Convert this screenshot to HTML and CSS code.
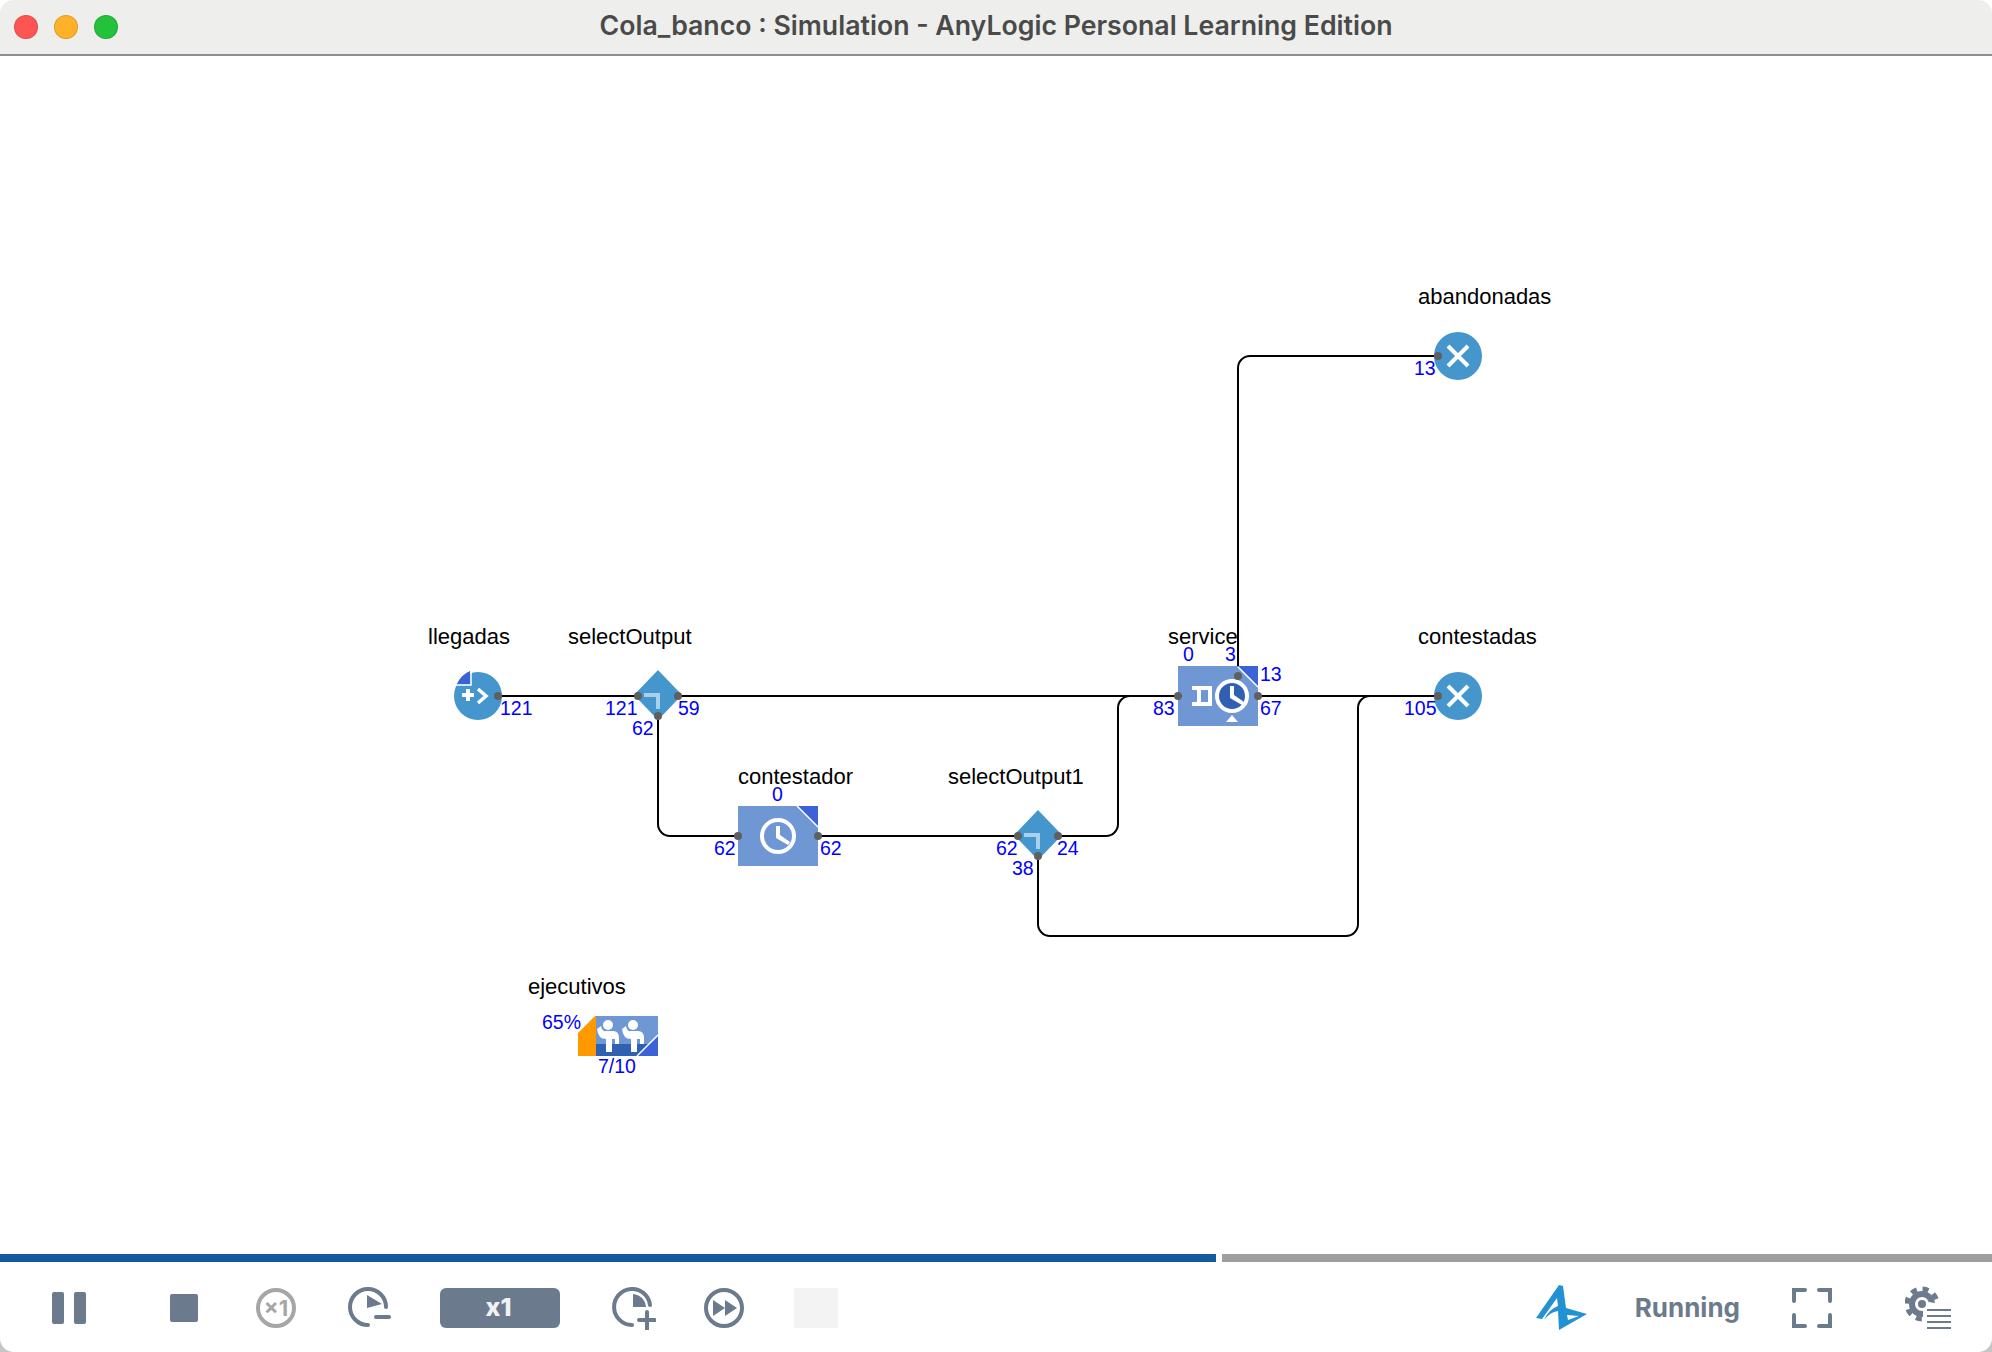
FILE: index.html
```html
<!DOCTYPE html>
<html lang="es">
<head>
    <meta charset="UTF-8">
    <title>Cola_banco : Simulation - AnyLogic Personal Learning Edition</title>
    <link rel="stylesheet" href="styles.css">
</head>
<body>
    <div class="window">
        <header class="titlebar">
            <div class="lights">
                <span class="light light-red"></span>
                <span class="light light-yellow"></span>
                <span class="light light-green"></span>
            </div>
            <div class="title">Cola_banco : Simulation - AnyLogic Personal Learning Edition</div>
        </header>

        <main class="canvas">
            <svg class="diagram" width="1992" height="1198" viewBox="0 56 1992 1198">
                <defs>
                    <g id="sink">
                        <circle class="block" r="24"/>
                        <path class="cross" d="M-10 -10L10 10M10 -10L-10 10"/>
                    </g>
                    <g id="select">
                        <path class="block" d="M0 -25L24 0L0 25L-24 0Z"/>
                        <path class="arrow" d="M-14 0H0V14"/>
                    </g>
                </defs>

                <!-- connectors -->
                <g class="wires">
                    <path d="M498 696H638"/>
                    <path d="M678 696H1178"/>
                    <path d="M658 716V824a12 12 0 0 0 12 12H738"/>
                    <path d="M818 836H1018"/>
                    <path d="M1058 836H1106a12 12 0 0 0 12 -12V708a12 12 0 0 1 12 -12H1178"/>
                    <path d="M1038 856V924a12 12 0 0 0 12 12H1346a12 12 0 0 0 12 -12V708a12 12 0 0 1 12 -12H1438"/>
                    <path d="M1258 696H1438"/>
                    <path d="M1238 676V368a12 12 0 0 1 12 -12H1438"/>
                </g>

                <!-- llegadas -->
                <circle class="block" cx="478" cy="696" r="24"/>
                <path class="corner" d="M457 684a24 24 0 0 1 13 -13H470V684Z"/>
                <path class="corner-line" d="M456 685H471V670"/>
                <path class="mark" d="M462 695H474M468 689V701"/>
                <path class="mark-thin" d="M478 689L486 696L478 703"/>

                <use href="#select" x="658" y="695"/>
                <use href="#select" x="1038" y="835"/>
                <use href="#sink" x="1458" y="696"/>
                <use href="#sink" x="1458" y="356"/>

                <!-- contestador -->
                <rect class="box" x="738" y="806" width="80" height="60"/>
                <path class="corner" d="M798 806H818V826Z"/>
                <path class="corner-line" d="M797 806L818 827"/>
                <circle class="ring" cx="778" cy="836" r="16"/>
                <path class="hand" d="M776 826H780V835L790 842L788 845L776 838Z"/>

                <!-- service -->
                <rect class="box" x="1178" y="666" width="80" height="60"/>
                <path class="corner" d="M1238 666H1258V686Z"/>
                <path class="corner-line" d="M1238 667L1258 687"/>
                <path class="hand" d="M1192 686H1212V706H1192V702H1197V690H1192ZM1201 690V702H1208V690Z"/>
                <circle class="ring ring-fill" cx="1232" cy="696" r="15"/>
                <path class="hand" d="M1230 686H1234V695L1244 702L1242 705L1230 698Z"/>
                <path class="hand" d="M1232 715L1238 722H1226Z"/>

                <!-- ejecutivos -->
                <path class="orange" d="M578 1033L595 1016H596V1056H578Z"/>
                <rect class="box" x="596" y="1016" width="62" height="40"/>
                <rect class="box-dark" x="596" y="1044" width="62" height="12"/>
                <path class="corner" d="M658 1036V1056H638Z"/>
                <path class="corner-line" d="M637 1056L658 1035"/>
                <g class="hand">
                    <circle cx="608" cy="1025" r="5"/>
                    <path d="M597 1029L601 1026Q602 1032 606 1031H613Q619 1031 619 1038V1044H615V1039H612V1052H606V1039Q598 1039 597 1029Z"/>
                    <circle cx="633" cy="1025" r="5"/>
                    <path d="M622 1029L626 1026Q627 1032 631 1031H638Q644 1031 644 1038V1044H640V1039H637V1052H631V1039Q623 1039 622 1029Z"/>
                </g>

                <!-- ports -->
                <g class="ports">
                    <circle cx="498" cy="696" r="4"/>
                    <circle cx="638" cy="696" r="4"/>
                    <circle cx="678" cy="696" r="4"/>
                    <circle cx="658" cy="716" r="4"/>
                    <circle cx="738" cy="836" r="4"/>
                    <circle cx="818" cy="836" r="4"/>
                    <circle cx="1018" cy="836" r="4"/>
                    <circle cx="1058" cy="836" r="4"/>
                    <circle cx="1038" cy="856" r="4"/>
                    <circle cx="1178" cy="696" r="4"/>
                    <circle cx="1258" cy="696" r="4"/>
                    <circle cx="1238" cy="676" r="4"/>
                    <circle cx="1438" cy="696" r="4"/>
                    <circle cx="1438" cy="356" r="4"/>
                </g>

                <!-- names -->
                <g class="names">
                    <text x="428" y="644">llegadas</text>
                    <text x="568" y="644">selectOutput</text>
                    <text x="738" y="784">contestador</text>
                    <text x="948" y="784">selectOutput1</text>
                    <text x="1168" y="644">service</text>
                    <text x="1418" y="644">contestadas</text>
                    <text x="1418" y="304">abandonadas</text>
                    <text x="528" y="994">ejecutivos</text>
                </g>

                <!-- counters -->
                <g class="counts">
                    <text x="500" y="715">121</text>
                    <text x="605" y="715">121</text>
                    <text x="678" y="715">59</text>
                    <text x="632" y="735">62</text>
                    <text x="772" y="801">0</text>
                    <text x="714" y="855">62</text>
                    <text x="820" y="855">62</text>
                    <text x="996" y="855">62</text>
                    <text x="1057" y="855">24</text>
                    <text x="1012" y="875">38</text>
                    <text x="1183" y="661">0</text>
                    <text x="1225" y="661">3</text>
                    <text x="1260" y="681">13</text>
                    <text x="1153" y="715">83</text>
                    <text x="1260" y="715">67</text>
                    <text x="1404" y="715">105</text>
                    <text x="1414" y="375">13</text>
                    <text x="542" y="1029">65%</text>
                    <text x="598" y="1073">7/10</text>
                </g>
            </svg>
        </main>

        <div class="progress">
            <div class="progress-done"></div>
            <div class="progress-rest"></div>
        </div>

        <footer class="toolbar">
            <div class="tools">
                <svg class="tool tool-pause" width="34" height="32" viewBox="0 0 34 32">
                    <rect class="solid" width="12" height="32" rx="2"/>
                    <rect class="solid" x="22" width="12" height="32" rx="2"/>
                </svg>
                <svg class="tool tool-stop" width="28" height="28" viewBox="0 0 28 28">
                    <rect class="solid" width="28" height="28" rx="2"/>
                </svg>
                <svg class="tool tool-reset" width="40" height="40" viewBox="0 0 40 40">
                    <circle class="line-off" cx="20" cy="20" r="18"/>
                    <text class="reset-text" x="20" y="28">×1</text>
                </svg>
                <svg class="tool tool-slower" width="44" height="42" viewBox="0 0 44 42">
                    <path class="line" d="M21 2A18 18 0 1 0 21 38"/>
                    <path class="line" d="M21 2A18 18 0 0 1 39 20"/>
                    <path class="solid" d="M20 8L35 17L20 21Z"/>
                    <path class="line" d="M29 30H42"/>
                </svg>
                <div class="speed">x1</div>
                <svg class="tool tool-faster" width="44" height="43" viewBox="0 0 44 43">
                    <path class="line" d="M38 18A18 18 0 1 0 20 38"/>
                    <path class="solid" d="M21 7A14 14 0 0 1 34 20H21Z"/>
                    <path class="line" d="M35 25V42M27 33H43"/>
                </svg>
                <svg class="tool tool-run" width="40" height="40" viewBox="0 0 40 40">
                    <circle class="line" cx="20" cy="20" r="18"/>
                    <path class="solid" d="M9 12L21 20L9 28ZM21 12L33 20L21 28Z"/>
                </svg>
                <div class="tool-blank"></div>
            </div>

            <div class="tools">
                <svg class="logo" width="52" height="46" viewBox="-1 0 52 46">
                    <path class="logo-fill" fill-rule="evenodd" d="M0 33L23 0L27 1L30 23L51 29L23 45L22 26Q14 27 8 35Q13 24 22 21L21 13L6 34ZM31 30L32 35L43 31Z"/>
                </svg>
                <div class="status">Running</div>
                <svg class="tool-full" width="40" height="40" viewBox="0 0 40 40">
                    <path class="line" d="M2 13V2H13M27 2H38V13M38 27V38H27M13 38H2V27"/>
                </svg>
                <svg class="tool-gear" width="46" height="44" viewBox="0 0 46 44">
                    <circle class="gear-teeth" cx="17" cy="18" r="15"/>
                    <circle class="solid" cx="17" cy="18" r="13"/>
                    <circle class="gear-mask" cx="17" cy="18" r="7"/>
                    <circle class="solid" cx="17" cy="18" r="4"/>
                    <path class="gear-mask" d="M18 24L24 16L46 20V44H18Z"/>
                    <path class="gear-lines" d="M22 24H46M22 30H46M22 36H46M22 42H46"/>
                </svg>
            </div>
        </footer>
    </div>
</body>
</html>
```

FILE: styles.css
```css
:root {
    --slate: #6c7a8d;
    --block: #4596cd;
    --box: #6f97d4;
    --box-dark: #2f60b2;
    --corner: #3c62d8;
}

* {
    box-sizing: border-box;
}

body {
    margin: 0;
    background: linear-gradient(#fff 50%, #c6c6c6 50%);
}

.window {
    display: flex;
    flex-direction: column;
    height: 1352px;
    overflow: hidden;
    background: #fff;
    border-radius: 14px;
}

/* title bar */
.titlebar {
    display: grid;
    grid-template-columns: 1fr auto 1fr;
    align-items: center;
    height: 56px;
    background: #eeeeec;
    border-bottom: 2px solid #8f8f8f;
}

.lights {
    display: flex;
    gap: 16px;
    padding-left: 14px;
}

.light {
    width: 24px;
    height: 24px;
    border-radius: 50%;
    border: 1px solid rgba(0,0,0,0.12);
}

.light-red {
    background: #ff5552;
}

.light-yellow {
    background: #ffb228;
}

.light-green {
    background: #24c13b;
}

.title {
    margin-bottom: 5px;
    font-family: Inter, sans-serif;
    font-size: 26.7px;
    font-weight: 600;
    color: #4a4a4a;
    white-space: nowrap;
}

/* diagram */
.canvas {
    flex: 1;
    height: 1198px;
}

.diagram {
    display: block;
}

.wires path {
    fill: none;
    stroke: #000;
    stroke-width: 2;
}

.block {
    fill: var(--block);
}

.box {
    fill: var(--box);
}

.box-dark {
    fill: var(--box-dark);
}

.orange {
    fill: #ff9900;
}

.corner {
    fill: var(--corner);
}

.corner-line {
    fill: none;
    stroke: #fff;
    stroke-width: 1.5;
}

.cross {
    fill: none;
    stroke: #fff;
    stroke-width: 4;
}

.arrow {
    fill: none;
    stroke: #a9d0ea;
    stroke-width: 4;
}

.mark {
    fill: none;
    stroke: #fff;
    stroke-width: 4;
}

.mark-thin {
    fill: none;
    stroke: #fff;
    stroke-width: 3.5;
}

.ring {
    fill: none;
    stroke: #fff;
    stroke-width: 4;
}

.ring-fill {
    fill: var(--box-dark);
}

.hand {
    fill: #fff;
}

.ports circle {
    fill: #5f5f5f;
}

.names text {
    font-family: "Liberation Sans", Arial, sans-serif;
    font-size: 22px;
    fill: #000;
}

.counts text {
    font-family: "Liberation Sans", Arial, sans-serif;
    font-size: 19.5px;
    fill: #0000ff;
}

/* progress bar */
.progress {
    display: flex;
    gap: 6px;
    height: 8px;
}

.progress-done {
    width: 1216px;
    background: #155a9f;
}

.progress-rest {
    flex: 1;
    background: #9e9e9e;
}

/* bottom toolbar */
.toolbar {
    flex: none;
    display: flex;
    justify-content: space-between;
    align-items: center;
    height: 90px;
    padding: 2px 41px 0 52px;
}

.tools {
    display: flex;
    align-items: center;
}

.tool {
    display: block;
}

.tool-stop {
    margin-left: 84px;
}

.tool-reset {
    margin-left: 58px;
}

.tool-slower {
    margin-left: 51px;
}

.tool-faster {
    margin-left: 52px;
}

.tool-run {
    margin-left: 48px;
}

.solid {
    fill: var(--slate);
}

.line {
    fill: none;
    stroke: var(--slate);
    stroke-width: 4;
    stroke-linecap: round;
}

.line-off {
    fill: none;
    stroke: #a6a6a6;
    stroke-width: 4;
}

.reset-text {
    font-family: Inter, sans-serif;
    font-size: 22px;
    font-weight: 700;
    fill: #a6a6a6;
    text-anchor: middle;
}

.speed {
    width: 120px;
    height: 40px;
    margin-left: 49px;
    padding-right: 3px;
    border-radius: 6px;
    background: var(--slate);
    color: #f2f2f2;
    font-family: Inter, sans-serif;
    font-size: 25px;
    font-weight: 800;
    line-height: 38px;
    text-align: center;
}

.tool-blank {
    width: 44px;
    height: 40px;
    margin-left: 50px;
    background: #f3f3f3;
}

.logo-fill {
    fill: #2292d2;
}

.status {
    margin: 0 0 2px 48px;
    font-family: Inter, sans-serif;
    font-size: 26px;
    font-weight: 700;
    color: var(--slate);
}

.tool-full {
    margin-left: 52px;
}

.tool-gear {
    margin-left: 73px;
}

.gear-teeth {
    fill: none;
    stroke: var(--slate);
    stroke-width: 5;
    stroke-dasharray: 6 5.8;
}

.gear-mask {
    fill: #fff;
}

.gear-lines {
    fill: none;
    stroke: var(--slate);
    stroke-width: 2;
}
```
